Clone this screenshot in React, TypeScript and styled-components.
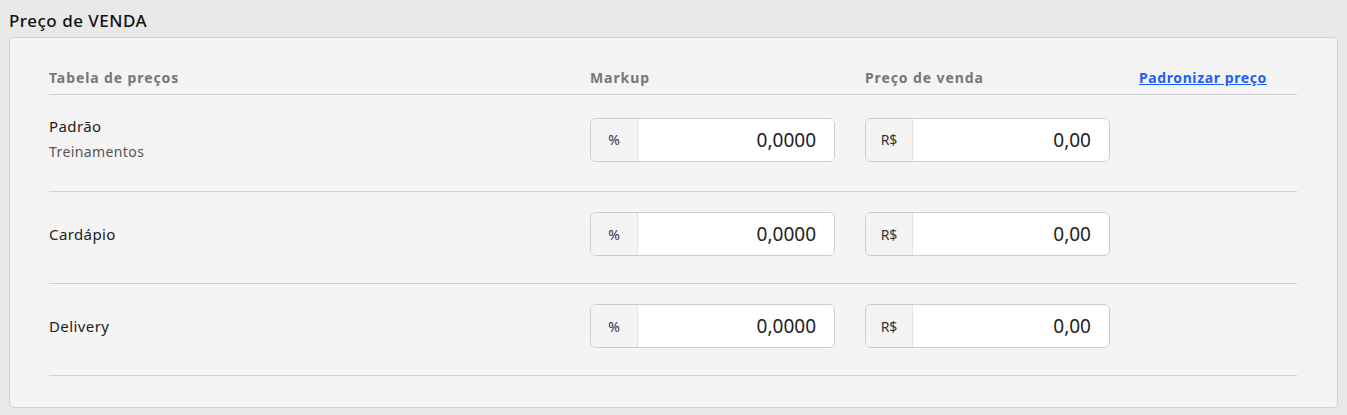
import styled, { createGlobalStyle } from "styled-components";

const GlobalStyle = createGlobalStyle`
    body {
        margin: 0;
        background: #e9e9e9;
        font-family: "Noto Sans", "Open Sans", sans-serif;
        color: #222;
    }
`;

interface PriceRow {
    name: string;
    subtitle?: string;
    markup: string;
    price: string;
}

const rows: PriceRow[] = [
    { name: "Padrão", subtitle: "Treinamentos", markup: "0,0000", price: "0,00" },
    { name: "Cardápio", markup: "0,0000", price: "0,00" },
    { name: "Delivery", markup: "0,0000", price: "0,00" },
];

export default function App() {
    return (
        <>
            <GlobalStyle />
            <Page>
                <Title>Preço de VENDA</Title>
                <Card>
                    <HeaderRow>
                        <HeaderCell>Tabela de preços</HeaderCell>
                        <HeaderCell>Markup</HeaderCell>
                        <HeaderCell>Preço de venda</HeaderCell>
                        <LinkCell>
                            <Link href="#">Padronizar preço</Link>
                        </LinkCell>
                    </HeaderRow>
                    {rows.map((row) => (
                        <Row key={row.name}>
                            <Label $tall={!!row.subtitle}>
                                <Name>{row.name}</Name>
                                {row.subtitle && <Subtitle>{row.subtitle}</Subtitle>}
                            </Label>
                            <InputGroup>
                                <Prefix>%</Prefix>
                                <Value defaultValue={row.markup} />
                            </InputGroup>
                            <InputGroup>
                                <Prefix>R$</Prefix>
                                <Value defaultValue={row.price} />
                            </InputGroup>
                            <div />
                        </Row>
                    ))}
                </Card>
            </Page>
        </>
    );
}

const Page = styled.div`
    padding: 10px 9px 8px 9px;
`;

const Title = styled.h2`
    margin: 0 0 5px 0;
    font-size: 17px;
    font-weight: 500;
    letter-spacing: 0.5px;
    color: #111;
    line-height: 22px;
`;

const Card = styled.div`
    background: #f4f4f4;
    border: 1px solid #cfcfcf;
    border-radius: 5px;
    padding: 22px 40px 31px 39px;
`;

const columns = `541px 275px 274px 1fr`;

const HeaderRow = styled.div`
    display: grid;
    grid-template-columns: ${columns};
    align-items: center;
    height: 34px;
    border-bottom: 1px solid #cfcfcf;
`;

const HeaderCell = styled.div`
    font-size: 14px;
    font-weight: 700;
    color: #777;
    letter-spacing: 0.9px;
`;

const LinkCell = styled.div`
    display: flex;
`;

const Link = styled.a`
    font-size: 14px;
    font-weight: 700;
    color: #1f5eff;
    letter-spacing: 0.6px;
    text-decoration: underline;
`;

const Row = styled.div`
    display: grid;
    grid-template-columns: ${columns};
    align-items: center;
    padding: 20px 0 27px 0;
    border-bottom: 1px solid #cfcfcf;
`;

const Label = styled.div<{ $tall: boolean }>`
    display: flex;
    flex-direction: column;
    gap: 5px;
    padding-bottom: ${(p) => (p.$tall ? "2px" : "0")};
`;

const Name = styled.div`
    font-size: 15px;
    line-height: 22px;
    font-weight: 400;
    letter-spacing: 0.4px;
    color: #222;
`;

const Subtitle = styled.div`
    font-size: 14px;
    line-height: 20px;
    letter-spacing: 0.4px;
    color: #555;
`;

const InputGroup = styled.div`
    display: flex;
    width: 245px;
    height: 44px;
    box-sizing: border-box;
    border: 1px solid #cccccc;
    border-radius: 6px;
    overflow: hidden;
    background: #fff;
`;

const Prefix = styled.div`
    width: 46px;
    display: flex;
    align-items: center;
    justify-content: center;
    background: #f4f4f4;
    border-right: 1px solid #e4e4e4;
    font-size: 14px;
    color: #333;
`;

const Value = styled.input`
    flex: 1;
    min-width: 0;
    border: none;
    outline: none;
    text-align: right;
    padding: 0 18px 0 8px;
    font-family: inherit;
    font-size: 19px;
    color: #222;
    background: #fff;
`;
